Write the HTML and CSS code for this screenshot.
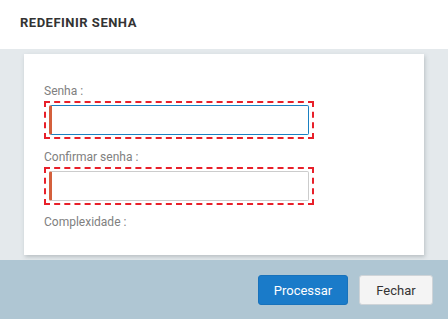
FILE: index.html
```html
<!DOCTYPE html>
<html lang="pt">

<head>
    <meta charset="UTF-8">
    <title>Redefinir senha</title>
    <link rel="stylesheet" href="styles.css">
</head>

<body>
<div class="modal">
    <div class="modal-header">
        <h1 class="title">REDEFINIR SENHA</h1>
    </div>

    <div class="modal-body">
        <form class="card" action="#">
            <label class="field-label" for="senha">Senha :</label>
            <div class="field-check">
                <input id="senha" class="field-input active" type="password">
            </div>

            <label class="field-label" for="confirmar">Confirmar senha :</label>
            <div class="field-check">
                <input id="confirmar" class="field-input" type="password">
            </div>

            <p class="field-label complexity">Complexidade :</p>
        </form>
    </div>

    <div class="modal-footer">
        <div class="button primary">Processar</div>
        <div class="button">Fechar</div>
    </div>
</div>
</body>
</html>
```

FILE: styles.css
```css
* {
    margin: 0;
    padding: 0;
    box-sizing: border-box;
}

html, body {
    height: 100%;
    width: 100%;
    overflow: hidden;
}

body {
    font-family: Roboto, "Liberation Sans", sans-serif;
    background-color: #ffffff;
}

.modal {
    display: flex;
    flex-direction: column;
    height: 100%;
}

.modal-header {
    height: 49px;
    display: flex;
    align-items: center;
    padding-left: 20px;
    padding-bottom: 4px;
    background-color: #ffffff;
}

.title {
    font-size: 13px;
    font-weight: bold;
    color: #333333;
    letter-spacing: 0.5px;
}

.modal-body {
    background-color: #e4e9ec;
    padding: 5px 24px 5px 24px;
}

.card {
    display: flex;
    flex-direction: column;
    align-items: flex-start;
    background-color: #ffffff;
    box-shadow: 1px 2px 4px rgba(60, 70, 80, 0.25);
    padding: 30px 20px 23px 20px;
}

.field-label {
    display: block;
    font-size: 12px;
    line-height: 14px;
    color: #808080;
    margin-bottom: 3px;
}

.field-check {
    border: 2px dashed #e8202a;
    padding: 2px 3px;
    margin-bottom: 11px;
    display: flex;
}

.field-input {
    width: 260px;
    height: 30px;
    border: 1px solid #cccccc;
    border-left: 3px solid #d4603c;
    border-radius: 2px;
    outline: none;
    background-color: #ffffff;
}

.field-input.active {
    border-color: #1a80c2;
    border-left-color: #d4603c;
}

.complexity {
    margin-top: -1px;
}

.modal-footer {
    flex: 1;
    display: flex;
    justify-content: flex-end;
    align-items: flex-start;
    gap: 11px;
    padding: 15px 15px 0 0;
    background-color: #afc6d3;
}

.button {
    height: 30px;
    width: 74px;
    display: flex;
    justify-content: center;
    align-items: center;
    font-size: 13px;
    color: #333333;
    background-color: #f4f4f4;
    border: 1px solid #cfd4d8;
    border-radius: 3px;
}

.button.primary {
    width: 90px;
    color: #ffffff;
    background-color: #1a7bc9;
    border-color: #1872bb;
}
```
